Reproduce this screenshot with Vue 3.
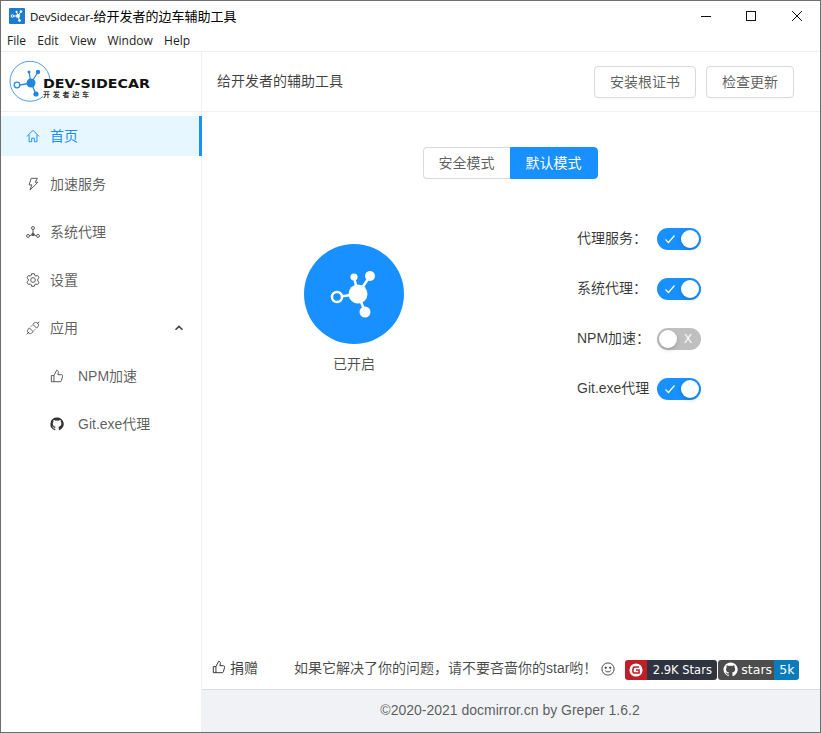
<script setup>
const menu = ['File', 'Edit', 'View', 'Window', 'Help']
const switches = [
  { label: '代理服务：', on: true },
  { label: '系统代理：', on: true },
  { label: 'NPM加速：', on: false },
  { label: 'Git.exe代理', on: true },
]
</script>

<template>
  <div class="window">
    <div class="titlebar">
      <svg class="app-icon" viewBox="0 0 16 16" width="16" height="16">
        <rect width="16" height="16" rx="1" fill="#1c7cd0" />
        <g fill="#fff" stroke="#fff">
          <circle cx="9" cy="8" r="2" stroke="none" />
          <path d="M9 8 12 3.5M9 8 7.5 3.5M9 8 10.5 12.5M9 8H4" stroke-width="1" />
          <circle cx="12" cy="3.5" r="1.3" stroke="none" />
          <circle cx="7.5" cy="3.8" r="1" stroke="none" />
          <circle cx="10.5" cy="12.5" r="1.3" stroke="none" />
          <circle cx="3.5" cy="8" r="1.3" fill="#1c7cd0" stroke-width="1" />
        </g>
      </svg>
      <span class="title"><span class="title-latin">DevSidecar-</span>给开发者的边车辅助工具</span>
      <div class="win-btns">
        <svg width="46" height="30" viewBox="0 0 46 30"><path d="M19 15.5H29" stroke="#111" /></svg>
        <svg width="46" height="30" viewBox="0 0 46 30"><rect x="18.5" y="10.5" width="9" height="9" fill="none" stroke="#111" /></svg>
        <svg width="46" height="30" viewBox="0 0 46 30"><path d="M18 10 28 20M28 10 18 20" stroke="#111" /></svg>
      </div>
    </div>
    <div class="menubar">
      <span v-for="m in menu" :key="m" class="menu-item">{{ m }}</span>
    </div>

    <div class="body">
      <aside class="sider">
        <div class="logo">
          <svg width="146" height="44" viewBox="0 0 146 44">
            <path d="M41 20A20 20 0 1 0 34 36.500" fill="none" stroke="#4a9fe0" stroke-width="1" />
            <g stroke="#2b8be0" stroke-width="1.300" fill="#2287e0">
              <path d="M22 23 29 12M22 23 20 12M22 23 27 34M22 23 11 25" fill="none" />
              <circle cx="22" cy="23" r="4.500" stroke="none" />
              <circle cx="29" cy="12" r="2.200" stroke="none" />
              <circle cx="20" cy="12" r="1.500" stroke="none" />
              <circle cx="27" cy="34" r="2.600" stroke="none" />
              <circle cx="8" cy="25" r="2.800" fill="#fff" />
            </g>
            <text x="34" y="28" textLength="107" lengthAdjust="spacingAndGlyphs" class="logo-main">DEV-SIDECAR</text>
            <text x="34" y="37" textLength="46" class="logo-sub">开发者边车</text>
          </svg>
        </div>
        <nav class="nav">
          <div class="nav-item active">
            <svg class="ic" viewBox="0 0 16 16" fill="none" stroke="currentColor"><path d="M1 8.500 8 1.500 15 8.500M3.500 6.500V14.500H6.500V10.500H9.500V14.500H12.500V6.500" /></svg>
            <span>首页</span>
          </div>
          <div class="nav-item">
            <svg class="ic" viewBox="0 0 16 16" fill="none" stroke="currentColor"><path d="M6 1.500H13L10.500 6H13.500L4.500 15 6.800 9H3.500Z" /></svg>
            <span>加速服务</span>
          </div>
          <div class="nav-item">
            <svg class="ic" viewBox="0 0 16 16" fill="none" stroke="currentColor"><circle cx="8" cy="3.500" r="1.700" /><circle cx="2.300" cy="12.500" r="1.700" /><circle cx="13.700" cy="12.500" r="1.700" /><circle cx="8" cy="10.800" r="1.500" fill="currentColor" /><path d="M8 5.200v4.500M6.700 11.400 4 12.300M9.300 11.400 12 12.300" /></svg>
            <span>系统代理</span>
          </div>
          <div class="nav-item">
            <svg class="ic" viewBox="0 0 16 16" fill="none" stroke="currentColor"><circle cx="8" cy="8" r="2.700" /><path d="M6.500.8H9.500L10 2.800 11.300 3.500 13.300 2.800 14.900 5.500 13.400 6.900V9.100L14.900 10.500 13.300 13.200 11.300 12.500 10 13.200 9.500 15.200H6.500L6 13.200 4.700 12.500 2.700 13.200 1.100 10.500 2.600 9.100V6.900L1.100 5.500 2.700 2.800 4.700 3.500 6 2.800Z" /></svg>
            <span>设置</span>
          </div>
          <div class="nav-item">
            <svg class="ic" viewBox="0 0 16 16" fill="none" stroke="currentColor"><path d="M.8 15.200 3.500 12.500M12.500 3.500 15.200.8" /><path d="M3.800 7.800 8.200 12.200 6 14C5 14.800 3.500 14.400 2.600 13.400 1.600 12.500 1.200 11 2 10ZM12.200 8.200 7.800 3.800 10 2C11 1.200 12.500 1.600 13.400 2.600 14.400 3.500 14.800 5 14 6Z" /><path d="M5.500 6.500 7 5M9 11 10.500 9.500" /></svg>
            <span>应用</span>
            <svg class="caret" viewBox="0 0 10 10" width="10" height="10"><path d="M1.500 6.800 5 3.400 8.500 6.800" fill="none" stroke="#444" stroke-width="1.600" /></svg>
          </div>
          <div class="nav-item sub">
            <svg class="ic" viewBox="0 0 16 16" fill="none" stroke="currentColor"><path d="M1.500 7.500H4.500V14.500H1.500ZM4.500 7.500 7.500 1.500C9 1.500 9.800 2.500 9.500 4L9 6.500H13C14 6.500 14.700 7.300 14.400 8.300L13 13.500C12.800 14.100 12.300 14.500 11.700 14.500H4.500" /></svg>
            <span>NPM加速</span>
          </div>
          <div class="nav-item sub">
            <svg class="ic gh" viewBox="0 0 16 16"><path fill="currentColor" d="M8 .5a7.500 7.500 0 0 0-2.400 14.600c.4.100.5-.2.500-.4v-1.300c-2.100.5-2.500-1-2.500-1-.3-.9-.8-1.100-.8-1.100-.7-.5 0-.5 0-.5.700 0 1.200.8 1.200.8.700 1.100 1.700.8 2.100.6.100-.5.300-.8.500-1-1.700-.2-3.400-.8-3.400-3.700 0-.8.300-1.500.8-2-.1-.2-.4-1 .1-2 0 0 .6-.2 2.100.8a7 7 0 0 1 3.800 0c1.500-1 2.100-.8 2.100-.8.400 1 .2 1.800.1 2 .5.500.8 1.200.8 2 0 2.900-1.800 3.500-3.400 3.700.3.200.5.700.5 1.400v2.100c0 .2.100.5.500.4A7.500 7.500 0 0 0 8 .5Z" /></svg>
            <span>Git.exe代理</span>
          </div>
        </nav>
      </aside>

      <main class="main">
        <header class="head">
          <span class="head-title">给开发者的辅助工具</span>
          <div class="head-actions">
            <button class="btn">安装根证书</button>
            <button class="btn">检查更新</button>
          </div>
        </header>

        <section class="content">
          <div class="mode">
            <span class="seg">安全模式</span>
            <span class="seg on">默认模式</span>
          </div>
          <div class="panel">
            <div class="status">
              <div class="circle">
                <svg width="50" height="50" viewBox="0 0 50 50">
                  <g fill="#fff" stroke="#fff">
                    <path d="M29 25 41 7M29 25 25 8M29 25 36 43M29 25 8 28" stroke-width="2.500" fill="none" />
                    <circle cx="29" cy="25" r="9.500" stroke="none" />
                    <circle cx="41" cy="7" r="5" stroke="none" />
                    <circle cx="25" cy="8" r="3.600" stroke="none" />
                    <circle cx="36" cy="43" r="5.500" stroke="none" />
                    <circle cx="8" cy="28" r="5" fill="#1890ff" stroke-width="2.500" />
                  </g>
                </svg>
              </div>
              <div class="status-text">已开启</div>
            </div>
            <div class="switches">
              <div v-for="s in switches" :key="s.label" class="sw-row">
                <span class="sw-label">{{ s.label }}</span>
                <span class="switch" :class="{ on: s.on }">
                  <svg v-if="s.on" class="sw-mark on-mark" viewBox="0 0 12 12" width="12" height="12"><path d="M1.500 6.500 4.500 9.500 10.500 2.500" fill="none" stroke="#fff" stroke-width="1.200" /></svg>
                  <span class="knob"></span>
                  <span v-if="!s.on" class="sw-x">X</span>
                </span>
              </div>
            </div>
          </div>
        </section>

        <div class="donate">
          <span class="donate-btn">
            <svg class="ic dark" viewBox="0 0 16 16" fill="none" stroke="currentColor"><path d="M1.500 7.500H4.500V14.500H1.500ZM4.500 7.500 7.500 1.500C9 1.500 9.800 2.500 9.500 4L9 6.500H13C14 6.500 14.700 7.300 14.400 8.300L13 13.500C12.800 14.100 12.300 14.500 11.700 14.500H4.500" /></svg>
            捐赠
          </span>
          <span class="donate-text">如果它解决了你的问题，请不要吝啬你的star哟！</span>
          <svg class="smile" viewBox="0 0 16 16" width="14" height="14" fill="none" stroke="#333"><circle cx="8" cy="8" r="7" /><circle cx="5.500" cy="6.500" r=".8" fill="#333" /><circle cx="10.500" cy="6.500" r=".8" fill="#333" /><path d="M4.800 9.800C6 11.800 10 11.800 11.200 9.800" /></svg>
          <span class="badge gitee">
            <span class="b-left">
              <svg viewBox="0 0 16 16" width="14" height="14"><circle cx="8" cy="8" r="7.500" fill="#fff" /><path d="M4.500 7.500V9.500C4.500 10.800 5.300 11.500 6.500 11.500H11.500V8H8M4.500 7.500C4.500 5.500 5.500 4.500 7 4.500H11.500" fill="none" stroke="#c71d23" stroke-width="1.800" /></svg>
            </span>
            <span class="b-right">2.9K Stars</span>
          </span>
          <span class="badge github">
            <span class="b-gh">
              <svg viewBox="0 0 16 16" width="15" height="15"><path fill="#fff" d="M8 .5a7.500 7.500 0 0 0-2.400 14.600c.4.100.5-.2.500-.4v-1.300c-2.100.5-2.500-1-2.500-1-.3-.9-.8-1.100-.8-1.100-.7-.5 0-.5 0-.5.700 0 1.200.8 1.200.8.700 1.100 1.700.8 2.100.6.100-.5.300-.8.500-1-1.700-.2-3.400-.8-3.400-3.700 0-.8.300-1.500.8-2-.1-.2-.4-1 .1-2 0 0 .6-.2 2.100.8a7 7 0 0 1 3.800 0c1.500-1 2.100-.8 2.100-.8.400 1 .2 1.800.1 2 .5.500.8 1.200.8 2 0 2.900-1.800 3.500-3.400 3.700.3.200.5.700.5 1.400v2.100c0 .2.100.5.500.4A7.500 7.500 0 0 0 8 .5Z" /></svg>
              stars
            </span>
            <span class="b-count">5k</span>
          </span>
        </div>

        <footer class="foot">©2020-2021 docmirror.cn by Greper 1.6.2</footer>
      </main>
    </div>
  </div>
</template>

<style>
html, body { margin: 0; background: #fff; }
</style>

<style scoped>
.window {
  width: 821px;
  height: 733px;
  box-sizing: border-box;
  border: 1px solid #6e6e6e;
  display: flex;
  flex-direction: column;
  background: #fff;
  overflow: hidden;
  font-family: "Liberation Sans", "Noto Sans CJK SC", sans-serif;
  font-size: 14px;
  color: rgba(0, 0, 0, 0.65);
}
.titlebar {
  height: 29px;
  display: flex;
  align-items: center;
  padding-left: 8px;
  flex: none;
}
.app-icon { margin-right: 5px; }
.title { font-family: "Open Sans", "Noto Sans CJK SC", sans-serif; font-size: 13px; color: #000; }
.title-latin { font-size: 11.500px; }
.win-btns { margin-left: auto; display: flex; }
.win-btns svg { display: block; }
.menubar {
  flex: none;
  display: flex;
  align-items: center;
  padding-left: 6px;
  gap: 11.300px;
  font-family: "Open Sans", sans-serif;
  font-size: 12px;
  color: #222;
  border-bottom: 1px solid #eee;
  box-sizing: border-box;
  height: 22px;
}
.body { flex: 1; display: flex; min-height: 0; }
.sider {
  width: 201px;
  flex: none;
  box-sizing: border-box;
  border-right: 1px solid #f0f0f0;
}
.logo {
  height: 60px;
  box-sizing: border-box;
  border-bottom: 1px solid #f0f0f0;
  padding: 8px 0 0 8px;
}
.logo svg { display: block; }
.logo-main { font: 700 13px "DejaVu Sans", sans-serif; fill: #111; }
.logo-sub { font: 700 7px "Noto Sans CJK SC", sans-serif; fill: #333; }
.nav { padding-top: 4px; }
.nav-item {
  height: 40px;
  margin-bottom: 8px;
  display: flex;
  align-items: center;
  padding-left: 25px;
  box-sizing: border-box;
  position: relative;
}
.nav-item > span { margin-bottom: 2px; }
.nav-item.active { background: #e6f7ff; color: #1890ff; border-right: 3px solid #1890ff; margin-right: -1px; }
.nav-item.sub { padding-left: 49px; }
.ic { width: 14px; height: 14px; flex: none; margin-right: 10px; stroke-width: 1.100; color: #555; }
.active .ic { color: #1890ff; }
.nav-item.sub .ic { margin-right: 14px; }
.ic.gh { color: #333; }
.caret { margin-left: auto; margin-right: 17px; }
.main { flex: 1; display: flex; flex-direction: column; min-width: 0; }
.head {
  height: 60px;
  flex: none;
  box-sizing: border-box;
  border-bottom: 1px solid #f0f0f0;
  display: flex;
  align-items: center;
  padding: 0 26px 0 15px;
  justify-content: space-between;
}
.head-title { color: rgba(0, 0, 0, 0.75); margin-bottom: 3px; }
.head-actions { display: flex; gap: 10px; }
.btn {
  height: 32px;
  padding: 0 15px 2px;
  background: #fff;
  border: 1px solid #d9d9d9;
  border-radius: 4px;
  font: inherit;
  color: rgba(0, 0, 0, 0.65);
  box-shadow: 0 2px 0 rgba(0, 0, 0, 0.015);
}
.content { flex: 1; display: flex; flex-direction: column; min-height: 0; }
.mode { display: flex; justify-content: center; margin-top: 35px; padding-right: 2px; }
.seg {
  height: 32px;
  box-sizing: border-box;
  line-height: 30px;
  padding: 0 15px;
  border: 1px solid #d9d9d9;
  border-right: none;
  border-radius: 4px 0 0 4px;
}
.seg.on {
  background: #1890ff;
  border: 1px solid #1890ff;
  color: #fff;
  border-radius: 0 4px 4px 0;
}
.panel { display: flex; margin-top: 35px; }
.status { width: 304px; flex: none; display: flex; flex-direction: column; align-items: center; padding-top: 30px; }
.circle {
  width: 100px;
  height: 100px;
  border-radius: 50%;
  background: #1890ff;
  display: flex;
  align-items: center;
  justify-content: center;
}
.status-text { margin-top: 10px; line-height: 20px; color: rgba(0, 0, 0, 0.7); }
.switches { padding-left: 71px; }
.sw-row { height: 50px; display: flex; align-items: center; }
.sw-label { width: 80px; flex: none; color: rgba(0, 0, 0, 0.78); white-space: nowrap; margin-bottom: 4px; }
.switch {
  width: 44px;
  height: 22px;
  border-radius: 11px;
  background: #bfbfbf;
  position: relative;
  display: block;
}
.switch.on { background: #1890ff; }
.knob {
  position: absolute;
  top: 2px;
  left: 2px;
  width: 18px;
  height: 18px;
  border-radius: 50%;
  background: #fff;
  box-shadow: 0 2px 4px rgba(0, 35, 11, 0.2);
}
.switch.on .knob { left: 24px; }
.sw-mark { position: absolute; left: 7px; top: 5px; }
.sw-x { position: absolute; left: 27px; top: 3px; font-size: 12px; line-height: 16px; color: #fff; }
.donate {
  height: 38px;
  flex: none;
  display: flex;
  align-items: center;
  padding-left: 10px;
  box-sizing: border-box;
  padding-bottom: 1px;
}
.donate-btn { display: flex; align-items: center; width: 82px; flex: none; color: rgba(0, 0, 0, 0.75); margin-bottom: 5px; }
.ic.dark { margin-right: 4px; color: #333; }
.donate-text { color: rgba(0, 0, 0, 0.72); white-space: nowrap; font-size: 14px; margin-bottom: 6px; }
.smile { margin-left: 4px; margin-right: 10px; flex: none; margin-bottom: 2px; }
.badge {
  height: 20px;
  display: flex;
  border-radius: 3px;
  overflow: hidden;
  font: 12.500px "DejaVu Sans", sans-serif;
  color: #fff;
  line-height: 20px;
  flex: none;
}
.gitee { width: 92px; margin-right: 1px; }
.b-left { width: 22px; background: #c01f27; display: flex; align-items: center; justify-content: center; }
.b-right { flex: 1; background: #2f3440; text-align: center; font-size: 11.500px; }
.github { width: 81px; }
.b-gh { width: 56px; background: #4d4d4d; display: flex; align-items: center; gap: 3px; padding-left: 5px; box-sizing: border-box; }
.b-count { flex: 1; background: #0a7bbb; text-align: center; }
.foot {
  height: 43px;
  flex: none;
  box-sizing: border-box;
  background: #f0f2f5;
  border-top: 1px solid #dcdcdc;
  text-align: center;
  line-height: 40px;
  padding-right: 2px;
}
</style>
